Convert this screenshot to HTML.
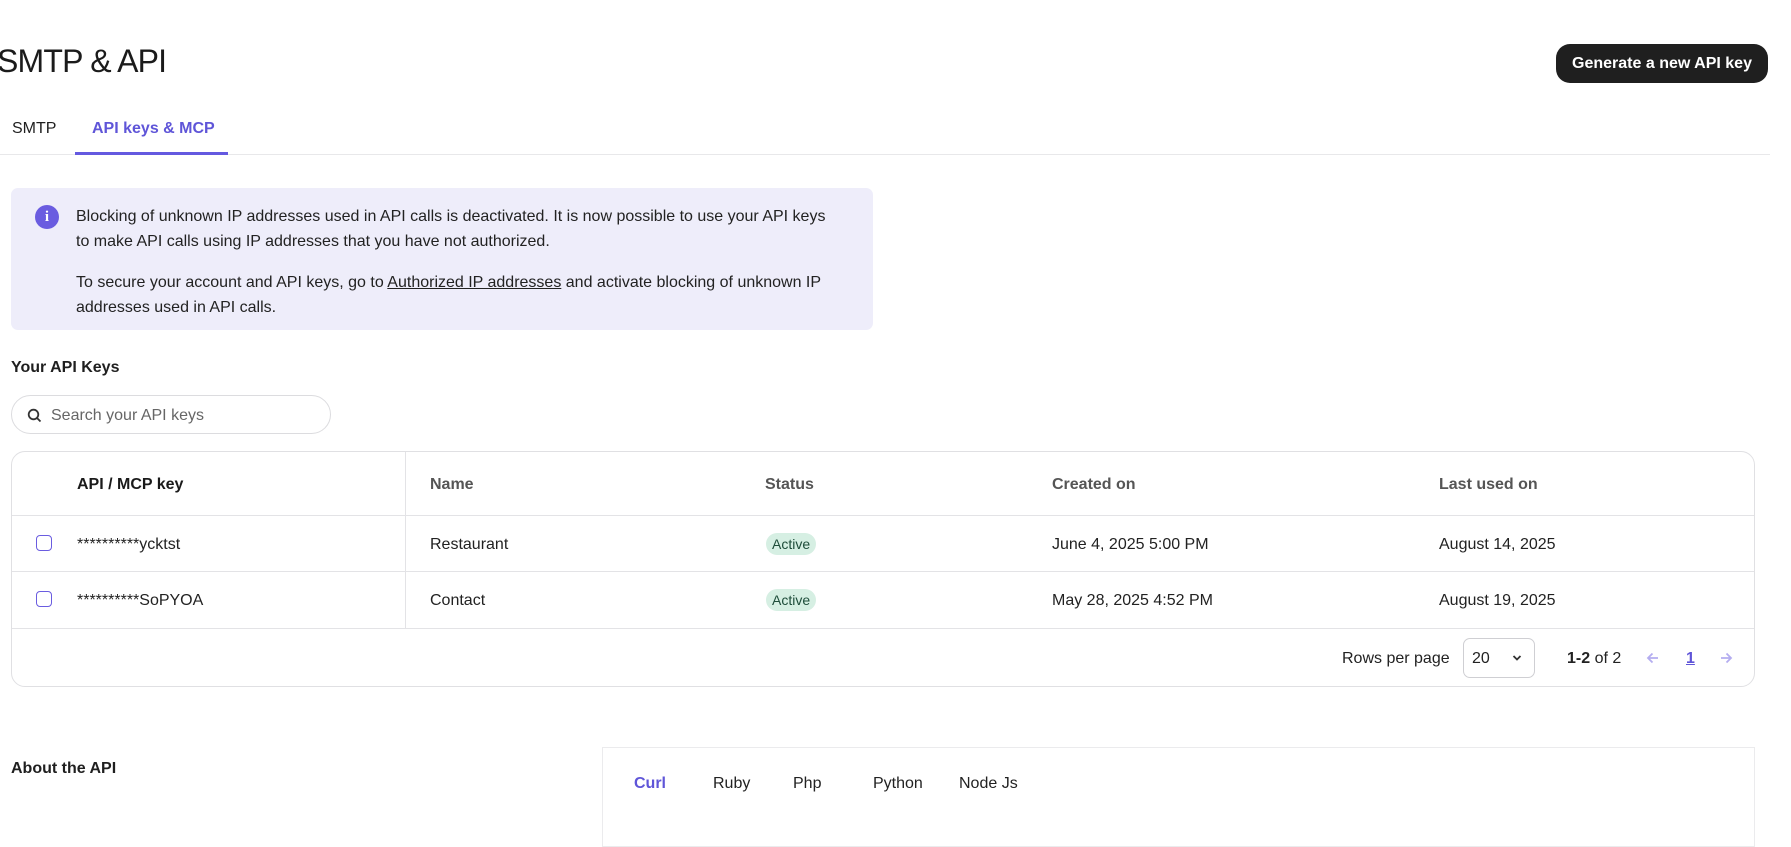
<!DOCTYPE html>
<html><head><meta charset="utf-8"><style>
*{box-sizing:border-box;margin:0;padding:0}
body{width:1791px;height:787px;overflow:hidden;background:#fff;font-family:"Liberation Sans",sans-serif;color:#1f1f1f;position:relative}
.a{position:absolute;white-space:nowrap}
h1{position:absolute;left:-3px;top:43px;font-size:32px;font-weight:400;letter-spacing:-0.8px;color:#1b1b1b}
.btn{left:1556px;top:44px;width:212px;height:39px;background:#1f1f1f;color:#fff;border-radius:14px;font-size:16px;font-weight:700;display:flex;align-items:center;justify-content:center}
.tabline{left:0;top:154px;width:1770px;height:1px;background:#e8e8ea}
.tabu{left:75px;top:152px;width:153px;height:3px;background:#6459e0}
.info{left:11px;top:188px;width:862px;height:142px;background:#eeedfa;border-radius:7px}
.info p{position:absolute;left:65px;font-size:16px;line-height:25px;color:#222;width:765px;white-space:normal}
.ic{left:24px;top:17px;width:24px;height:24px;border-radius:50%;background:#6a5ce0;color:#fff;font-size:15px;font-weight:700;text-align:center;line-height:24px;font-family:"Liberation Serif",serif}
.search{left:11px;top:395px;width:320px;height:39px;border:1px solid #dcdcdf;border-radius:20px}
.tbl{left:11px;top:451px;width:1744px;height:236px;border:1px solid #e0e0e3;border-radius:14px}
.hl{position:absolute;left:0;width:100%;height:1px;background:#e3e3e6}
.vl{position:absolute;left:393px;top:0;width:1px;height:176px;background:#e3e3e6}
.th{font-size:16px;color:#555;font-weight:700}
.td{font-size:16px;color:#222}
.cb{width:16px;height:16px;border:1.5px solid #6a5ce0;border-radius:4px}
.badge{background:#d6efe3;color:#1e4d3a;font-size:14px;border-radius:12px;padding:3px 6px;line-height:16px}
.sel{left:1463px;top:638px;width:72px;height:40px;border:1px solid #cfcfd3;border-radius:7px}
</style></head><body>
<h1>SMTP &amp; API</h1>
<div class="a btn">Generate a new API key</div>
<div class="a" style="left:12px;top:120px;font-size:16px">SMTP</div>
<div class="a" style="left:92px;top:120px;font-size:16px;color:#5f55d8;font-weight:700">API keys &amp; MCP</div>
<div class="a tabline"></div><div class="a tabu"></div>
<div class="a info">
<div class="a ic">i</div>
<p style="top:16px">Blocking of unknown IP addresses used in API calls is deactivated. It is now possible to use your API keys to make API calls using IP addresses that you have not authorized.</p>
<p style="top:82px">To secure your account and API keys, go to <u>Authorized IP addresses</u> and activate blocking of unknown IP addresses used in API calls.</p>
</div>
<div class="a" style="left:11px;top:359px;font-size:16px;font-weight:700">Your API Keys</div>
<div class="a search">
<svg style="position:absolute;left:15px;top:12px" width="15" height="15" viewBox="0 0 15 15"><circle cx="6.5" cy="6.5" r="4.8" fill="none" stroke="#333" stroke-width="1.8"/><path d="M10 10l3.5 3.5" stroke="#333" stroke-width="1.8"/></svg>
<div class="a" style="left:39px;top:11px;font-size:16px;color:#666">Search your API keys</div>
</div>
<div class="a tbl">
<div class="hl" style="top:63px"></div><div class="hl" style="top:119px"></div><div class="hl" style="top:176px"></div>
<div class="vl"></div>
<div class="a th" style="left:65px;top:24px;color:#1a1a1a">API / MCP key</div>
<div class="a th" style="left:418px;top:24px">Name</div>
<div class="a th" style="left:753px;top:24px">Status</div>
<div class="a th" style="left:1040px;top:24px">Created on</div>
<div class="a th" style="left:1427px;top:24px">Last used on</div>
<div class="a cb" style="left:24px;top:83px"></div>
<div class="a td" style="left:65px;top:84px">**********ycktst</div>
<div class="a td" style="left:418px;top:84px">Restaurant</div>
<div class="a badge" style="left:754px;top:81px">Active</div>
<div class="a td" style="left:1040px;top:84px">June 4, 2025 5:00 PM</div>
<div class="a td" style="left:1427px;top:84px">August 14, 2025</div>
<div class="a cb" style="left:24px;top:139px"></div>
<div class="a td" style="left:65px;top:140px">**********SoPYOA</div>
<div class="a td" style="left:418px;top:140px">Contact</div>
<div class="a badge" style="left:754px;top:137px">Active</div>
<div class="a td" style="left:1040px;top:140px">May 28, 2025 4:52 PM</div>
<div class="a td" style="left:1427px;top:140px">August 19, 2025</div>
</div>
<div class="a td" style="left:1342px;top:650px">Rows per page</div>
<div class="a sel"><div class="a td" style="left:8px;top:11px">20</div>
<svg style="position:absolute;left:48px;top:15px" width="10" height="8" viewBox="0 0 10 8"><path d="M1.5 2l3.5 3.5L8.5 2" fill="none" stroke="#333" stroke-width="1.8"/></svg></div>
<div class="a td" style="left:1567px;top:650px"><b>1-2</b> of 2</div>
<svg class="a" style="left:1646px;top:651px" width="14" height="14" viewBox="0 0 14 14"><path d="M12 7H2M6.5 2.5L2 7l4.5 4.5" fill="none" stroke="#b4adf0" stroke-width="1.8"/></svg>
<div class="a" style="left:1686px;top:650px;font-size:16px;color:#5f55d8;font-weight:700;text-decoration:underline">1</div>
<svg class="a" style="left:1719px;top:651px" width="14" height="14" viewBox="0 0 14 14"><path d="M2 7h10M7.5 2.5L12 7l-4.5 4.5" fill="none" stroke="#b4adf0" stroke-width="1.8"/></svg>
<div class="a" style="left:11px;top:760px;font-size:16px;font-weight:700">About the API</div>
<div class="a" style="left:602px;top:747px;width:1153px;height:100px;border:1px solid #ebebed"></div>
<div class="a" style="left:634px;top:775px;font-size:16px;color:#5f55d8;font-weight:700">Curl</div>
<div class="a td" style="left:713px;top:775px">Ruby</div>
<div class="a td" style="left:793px;top:775px">Php</div>
<div class="a td" style="left:873px;top:775px">Python</div>
<div class="a td" style="left:959px;top:775px">Node Js</div>
</body></html>
